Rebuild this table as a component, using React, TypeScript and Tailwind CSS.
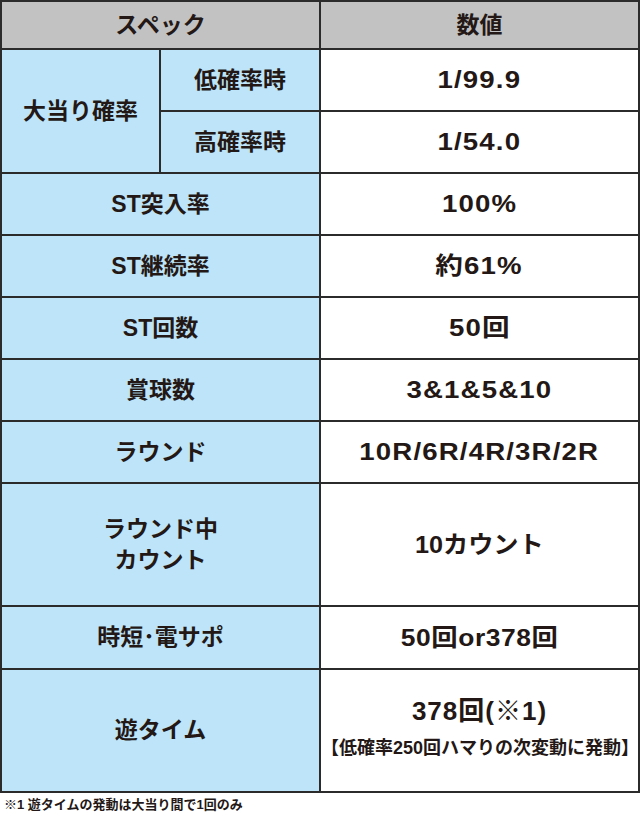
const font = {
  fontFamily: '"Liberation Sans", "Noto Sans CJK JP", sans-serif',
};

type Row = { label: React.ReactNode; value: React.ReactNode; tall?: boolean; h?: string };

// wide numeric text, like the print face in the reference
const Num = ({ children }: { children: React.ReactNode }) => (
  <span className="inline-block scale-x-[1.15] tracking-[1px]">{children}</span>
);

const rows: Row[] = [
  { label: "ST突入率", value: <Num>100%</Num> },
  { label: "ST継続率", value: <Num>約61%</Num> },
  { label: "ST回数", value: <Num>50回</Num> },
  { label: "賞球数", value: <Num>3&1&5&10</Num> },
  { label: "ラウンド", value: <Num>10R/6R/4R/3R/2R</Num> },
  {
    label: (
      <span className="leading-[31px]">
        ラウンド中
        <br />
        カウント
      </span>
    ),
    value: <span className="inline-block scale-x-[1.05]">10カウント</span>,
    tall: true,
  },
  {
    label: "時短･電サポ",
    value: <span className="inline-block scale-x-[1.1] tracking-[0.5px]">50回or378回</span>,
    h: "h-[63px]",
  },
  {
    label: "遊タイム",
    value: (
      <div className="flex flex-col items-center gap-[9px] pb-[4px]">
        <span className="text-[26px] leading-[30px] tracking-[1px]">378回(※1)</span>
        <span className="text-[18px] leading-[26px]">【低確率250回ハマりの次変動に発動】</span>
      </div>
    ),
    tall: true,
  },
];

const labelCls =
  "flex items-center justify-center text-center bg-[#bde4f8] border-r-2 border-b-2 border-[#2b2b2b] text-[23px] font-bold";
const valueCls =
  "flex items-center justify-center text-center bg-white border-r-2 border-b-2 border-[#2b2b2b] text-[24px] font-bold";

export default function App() {
  return (
    <div className="w-[640px] h-[813px] bg-white text-[#231815]" style={font}>
      <div className="w-[640px] border-t-2 border-l-2 border-[#2b2b2b]">
        {/* header */}
        <div className="flex h-[48px]">
          <div className="w-[319px] flex items-center justify-center bg-[#c2c2c2] border-r-2 border-b-2 border-[#2b2b2b] text-[23px] font-bold">
            スペック
          </div>
          <div className="w-[319px] flex items-center justify-center bg-[#c2c2c2] border-r-2 border-b-2 border-[#2b2b2b] text-[23px] font-bold">
            数値
          </div>
        </div>

        {/* 大当り確率 */}
        <div className="flex">
          <div className={`${labelCls} w-[159px] h-[124px]`}>大当り確率</div>
          <div className="flex flex-col">
            <div className="flex h-[62px]">
              <div className={`${labelCls} w-[160px]`}>低確率時</div>
              <div className={`${valueCls} w-[319px]`}>
                <Num>1/99.9</Num>
              </div>
            </div>
            <div className="flex h-[62px]">
              <div className={`${labelCls} w-[160px]`}>高確率時</div>
              <div className={`${valueCls} w-[319px]`}>
                <Num>1/54.0</Num>
              </div>
            </div>
          </div>
        </div>

        {rows.map((r, i) => (
          <div key={i} className={`flex ${r.tall ? "h-[123px]" : r.h ?? "h-[62px]"}`}>
            <div className={`${labelCls} w-[319px]`}>{r.label}</div>
            <div className={`${valueCls} w-[319px]`}>{r.value}</div>
          </div>
        ))}
      </div>
      <p className="pl-[4px] pt-[4px] text-[13px] leading-[16px] font-bold">※1 遊タイムの発動は大当り間で1回のみ</p>
    </div>
  );
}
